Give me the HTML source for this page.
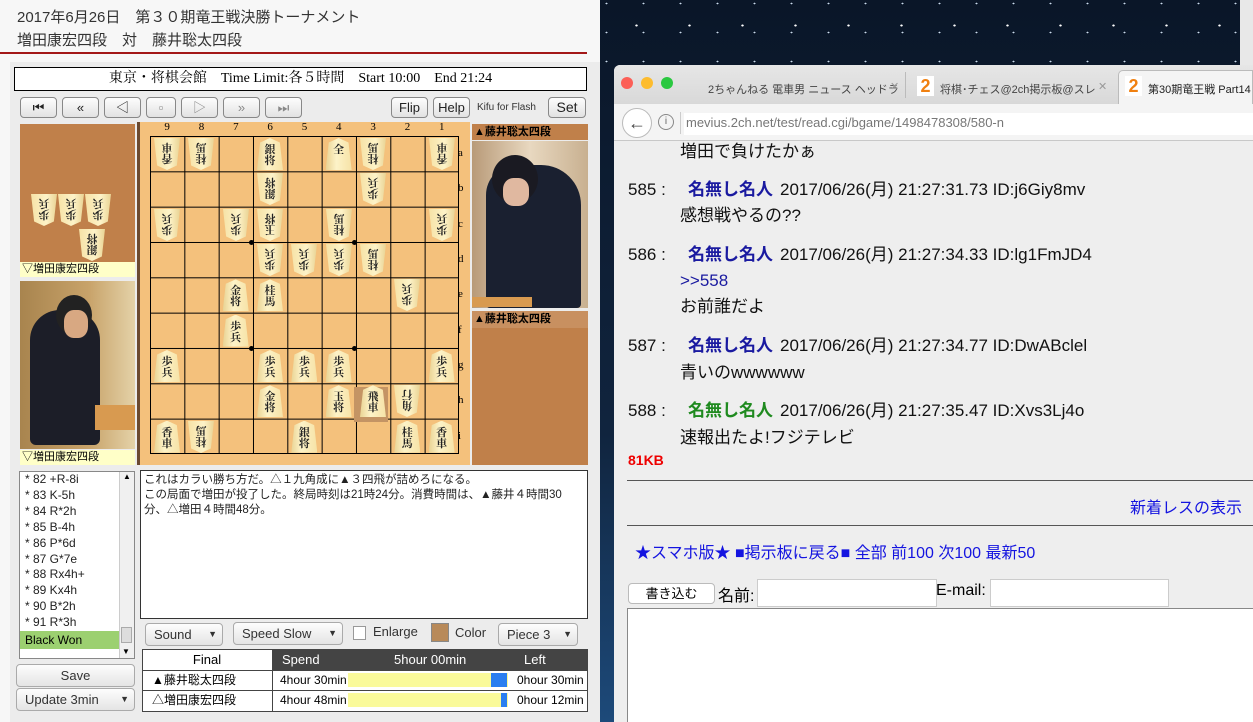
<!DOCTYPE html>
<html><head><meta charset="utf-8"><style>
*{margin:0;padding:0;box-sizing:border-box}
body{width:1253px;height:722px;overflow:hidden;position:relative;background:#f7f7f7;font-family:"Liberation Sans","Noto Sans CJK JP",sans-serif}
.a{position:absolute}
.btn{position:absolute;top:97px;height:21px;border:1px solid #888;border-radius:4px;background:linear-gradient(#fdfdfd,#e2e2e2);font-size:13px;text-align:center;line-height:19px;color:#222}
.pc{position:absolute;width:26px;height:32px;background:linear-gradient(90deg,#e9d394,#fdf3c8 40%,#f6e2a6);clip-path:polygon(50% 0,88% 14%,100% 100%,0 100%,12% 14%);font-family:"Noto Serif CJK SC","Noto Sans CJK JP",serif;font-size:11px;line-height:11px;text-align:center;padding-top:6px;color:#222;font-weight:bold}
.r{transform:rotate(180deg)}
.bt{position:absolute;height:23px;border:1px solid #aaa;border-radius:4px;background:linear-gradient(#fdfdfd,#e4e4e4);font-size:13px;line-height:21px;color:#333;padding-left:8px}
.post{position:absolute;left:628px;font-size:17px;line-height:22px;color:#111;white-space:nowrap}
.no{display:inline-block;width:60px}
.nm{display:inline-block;width:92px;color:#1a1aa0;font-weight:bold}
</style></head><body>
<div class="a" style="left:17px;top:6px;font-size:15px;color:#333">2017年6月26日　第３０期竜王戦決勝トーナメント</div>
<div class="a" style="left:17px;top:29px;font-size:15px;color:#333">増田康宏四段　対　藤井聡太四段</div>
<div class="a" style="left:0;top:52px;width:587px;height:2px;background:#a31818"></div>
<div class="a" style="left:10px;top:62px;width:590px;height:660px;background:#ececec"></div>
<div class="a" style="left:14px;top:67px;width:573px;height:24px;background:#fff;border:1px solid #000;font-family:'Liberation Serif','Noto Serif CJK SC',serif;font-size:14px;text-align:center;line-height:22px">東京・将棋会館　Time Limit:各５時間　Start 10:00　End 21:24</div>
<div class="btn" style="left:20px;width:37px">⏮</div>
<div class="btn" style="left:62px;width:37px">«</div>
<div class="btn" style="left:104px;width:37px">◁</div>
<div class="btn" style="left:146px;width:30px;color:#888">▫</div>
<div class="btn" style="left:181px;width:37px;color:#888">▷</div>
<div class="btn" style="left:223px;width:37px;color:#888">»</div>
<div class="btn" style="left:265px;width:37px;color:#888">⏭</div>
<div class="btn" style="left:391px;width:37px">Flip</div>
<div class="btn" style="left:433px;width:37px">Help</div>
<div class="a" style="left:477px;top:102px;font-size:10px;color:#333">Kifu for Flash</div>
<div class="btn" style="left:548px;width:38px;font-size:14px">Set</div>
<div class="a" style="left:20px;top:124px;width:115px;height:153px;background:#c0804a"></div>
<div class="a" style="left:20px;top:262px;width:115px;height:15px;background:#ffffc8;font-size:11px;line-height:15px;padding-left:2px">▽増田康宏四段</div>
<div class="a" style="left:20px;top:281px;width:115px;height:168px;background:linear-gradient(90deg,#a8844e,#c8a36a 60%,#e4d2a8)"></div>
<div class="a" style="left:30px;top:310px;width:70px;height:135px;background:#1c1e28;border-radius:30px 30px 6px 6px"></div>
<div class="a" style="left:56px;top:295px;width:36px;height:40px;background:#222;border-radius:50%"></div>
<div class="a" style="left:64px;top:310px;width:24px;height:28px;background:#d8a882;border-radius:40%"></div>
<div class="a" style="left:95px;top:405px;width:40px;height:25px;background:#d89a50"></div>
<div class="a" style="left:20px;top:450px;width:115px;height:15px;background:#ffffc8;font-size:11px;line-height:15px;padding-left:2px">▽増田康宏四段</div>
<div class="a" style="left:137px;top:122px;width:333px;height:343px;background:#f4c17c;border-left:3px solid #6b4a30"></div>
<div class="a" style="left:150px;top:136px;width:309px;height:318px;border:1px solid #000;background-image:linear-gradient(90deg,#000 1px,transparent 1px),linear-gradient(#000 1px,transparent 1px);background-size:34.33px 100%,100% 35.33px;background-position:-1px 0,0 -1px"></div>
<div class="a" style="left:354px;top:387px;width:34px;height:35px;background:#c49464"></div>
<div class="a" style="left:249px;top:240px;width:5px;height:5px;border-radius:50%;background:#000"></div>
<div class="a" style="left:352px;top:240px;width:5px;height:5px;border-radius:50%;background:#000"></div>
<div class="a" style="left:249px;top:346px;width:5px;height:5px;border-radius:50%;background:#000"></div>
<div class="a" style="left:352px;top:346px;width:5px;height:5px;border-radius:50%;background:#000"></div>
<div class="a" style="left:150px;top:121px;width:309px;font-family:'Liberation Serif',serif;font-size:11px;display:flex;justify-content:space-around">
<span>9</span><span>8</span><span>7</span><span>6</span><span>5</span><span>4</span><span>3</span><span>2</span><span>1</span></div>
<div class="a" style="left:458px;top:136px;width:8px;font-family:'Liberation Serif',serif;font-size:11px;line-height:35.33px">a<br>b<br>c<br>d<br>e<br>f<br>g<br>h<br>i</div>
<div id="pcs"></div>
<div class="a" style="left:472px;top:124px;width:116px;height:16px;background:#c0804a;font-size:11px;font-weight:bold;line-height:16px;padding-left:2px">▲藤井聡太四段</div>
<div class="a" style="left:472px;top:141px;width:116px;height:167px;background:linear-gradient(90deg,#b89a78,#e8d8c0 50%,#c8b090)"></div>
<div class="a" style="left:486px;top:165px;width:95px;height:143px;background:#1a2030;border-radius:30px 40px 4px 4px"></div>
<div class="a" style="left:492px;top:155px;width:46px;height:48px;background:#1a1a22;border-radius:50%"></div>
<div class="a" style="left:503px;top:178px;width:26px;height:28px;background:#e0b8a0;border-radius:40%"></div>
<div class="a" style="left:472px;top:297px;width:60px;height:10px;background:#d89a50"></div>
<div class="a" style="left:472px;top:311px;width:116px;height:154px;background:#c0804a"></div>
<div class="a" style="left:472px;top:311px;width:116px;height:17px;background:#c89060;font-size:11px;font-weight:bold;line-height:17px;padding-left:2px">▲藤井聡太四段</div>
<div class="a" style="left:19px;top:471px;width:116px;height:188px;background:#fff;border:1px solid #888"></div>
<div class="a" style="left:25px;top:472px;font-size:12px;line-height:15.9px;color:#222">* 82 +R-8i<br>* 83 K-5h<br>* 84 R*2h<br>* 85 B-4h<br>* 86 P*6d<br>* 87 G*7e<br>* 88 Rx4h+<br>* 89 Kx4h<br>* 90 B*2h<br>* 91 R*3h</div>
<div class="a" style="left:20px;top:631px;width:99px;height:18px;background:#9cd070;font-size:12px;line-height:18px;padding-left:5px">Black Won</div>
<div class="a" style="left:119px;top:472px;width:15px;height:186px;background:#f0f0f0;border-left:1px solid #ccc;font-size:8px;text-align:center">▲</div>
<div class="a" style="left:121px;top:627px;width:11px;height:16px;background:#ddd;border:1px solid #aaa"></div>
<div class="a" style="left:122px;top:647px;font-size:8px">▼</div>
<div class="bt" style="left:16px;top:664px;width:119px;text-align:center;padding:0">Save</div>
<div class="bt" style="left:16px;top:688px;width:119px">Update  3min <span style="position:absolute;right:5px;font-size:9px">▼</span></div>
<div class="a" style="left:140px;top:470px;width:448px;height:149px;background:#fff;border:1px solid #333;font-size:11.5px;line-height:15px;padding:2px 3px;color:#222">これはカラい勝ち方だ。△１九角成に▲３四飛が詰めろになる。<br>この局面で増田が投了した。終局時刻は21時24分。消費時間は、▲藤井４時間30分、△増田４時間48分。</div>
<div class="bt" style="left:145px;top:623px;width:78px">Sound <span style="position:absolute;right:5px;font-size:9px">▼</span></div>
<div class="bt" style="left:233px;top:622px;width:110px">Speed Slow <span style="position:absolute;right:5px;font-size:9px">▼</span></div>
<div class="a" style="left:353px;top:626px;width:13px;height:14px;background:#fff;border:1px solid #999"></div>
<div class="a" style="left:373px;top:624px;font-size:13px;color:#333">Enlarge</div>
<div class="a" style="left:431px;top:623px;width:18px;height:19px;background:#b88a5a;border:1px solid #888"></div>
<div class="a" style="left:455px;top:625px;font-size:13px;color:#333">Color</div>
<div class="bt" style="left:498px;top:623px;width:80px">Piece 3 <span style="position:absolute;right:5px;font-size:9px">▼</span></div>
<div class="a" style="left:142px;top:649px;width:446px;height:63px;border:1px solid #444;background:#fff"></div>
<div class="a" style="left:272px;top:649px;width:316px;height:21px;background:#444;color:#fff;font-size:13px;line-height:21px"><span class="a" style="left:10px">Spend</span><span class="a" style="left:122px">5hour 00min</span><span class="a" style="left:252px">Left</span></div>
<div class="a" style="left:142px;top:649px;width:130px;height:21px;text-align:center;font-size:13px;line-height:21px">Final</div>
<div class="a" style="left:142px;top:670px;width:446px;height:1px;background:#444"></div>
<div class="a" style="left:142px;top:690px;width:446px;height:1px;background:#444"></div>
<div class="a" style="left:272px;top:670px;width:1px;height:42px;background:#444"></div>
<div class="a" style="left:152px;top:671px;font-size:12px;line-height:19px">▲藤井聡太四段</div>
<div class="a" style="left:152px;top:691px;font-size:12px;line-height:19px">△増田康宏四段</div>
<div class="a" style="left:348px;top:673px;width:160px;height:14px;background:#fafa9a"></div>
<div class="a" style="left:491px;top:673px;width:16px;height:14px;background:#2a7ef0"></div>
<div class="a" style="left:348px;top:693px;width:160px;height:14px;background:#fafa9a"></div>
<div class="a" style="left:501px;top:693px;width:6px;height:14px;background:#2a7ef0"></div>
<div class="a" style="left:280px;top:672px;font-size:12px;line-height:17px">4hour 30min</div>
<div class="a" style="left:280px;top:692px;font-size:12px;line-height:17px">4hour 48min</div>
<div class="a" style="left:517px;top:672px;font-size:12px;line-height:17px;width:70px;overflow:hidden;white-space:nowrap">0hour 30min</div>
<div class="a" style="left:517px;top:692px;font-size:12px;line-height:17px;width:70px;overflow:hidden;white-space:nowrap">0hour 12min</div>

<div class="a" style="left:600px;top:0;width:653px;height:722px;background:linear-gradient(#0a1628,#10243e 60%,#1d4a7a)"></div>
<div class="a" style="left:600px;top:0;width:653px;height:65px;background-image:radial-gradient(#fff 1px,transparent 1.5px),radial-gradient(#cde 0.8px,transparent 1.2px);background-size:53px 41px,37px 29px;background-position:10px 5px,25px 18px"></div>
<div class="a" style="left:1240px;top:0;width:13px;height:65px;background:#e8e8e8"></div>
<div class="a" style="left:614px;top:65px;width:639px;height:657px;background:#eeeeee;border-radius:6px 0 0 0"></div>
<div class="a" style="left:614px;top:65px;width:639px;height:40px;background:linear-gradient(#e6e6e6,#d8d8d8);border-radius:6px 0 0 0"></div>
<div class="a" style="left:621px;top:77px;width:12px;height:12px;border-radius:50%;background:#fc5f57"></div>
<div class="a" style="left:641px;top:77px;width:12px;height:12px;border-radius:50%;background:#fdbc2e"></div>
<div class="a" style="left:661px;top:77px;width:12px;height:12px;border-radius:50%;background:#2ac840"></div>
<div class="a" style="left:708px;top:81px;font-size:11px;color:#444">2ちゃんねる 電車男 ニュース ヘッドラ</div>
<div class="a" style="left:890px;top:80px;font-size:11px;color:#999">✕</div>
<div class="a" style="left:905px;top:72px;width:1px;height:26px;background:#bbb"></div>
<div class="a" style="left:917px;top:76px;width:17px;height:20px;background:#fff;color:#f08010;font-size:18px;font-weight:bold;line-height:20px;text-align:center">2</div>
<div class="a" style="left:940px;top:81px;font-size:11px;color:#444">将棋･チェス@2ch掲示板@スレ</div>
<div class="a" style="left:1098px;top:80px;font-size:11px;color:#999">✕</div>
<div class="a" style="left:1118px;top:70px;width:135px;height:35px;background:#f4f4f4;border:1px solid #bbb;border-bottom:none;border-radius:5px 0 0 0"></div>
<div class="a" style="left:1125px;top:76px;width:17px;height:20px;background:#fff;color:#f08010;font-size:18px;font-weight:bold;line-height:20px;text-align:center">2</div>
<div class="a" style="left:1148px;top:81px;font-size:11px;color:#222;white-space:nowrap">第30期竜王戦 Part14</div>
<div class="a" style="left:614px;top:104px;width:639px;height:37px;background:#f4f4f4;border-bottom:1px solid #c8c8c8"></div>
<div class="a" style="left:622px;top:108px;width:30px;height:30px;border-radius:50%;background:#fff;border:1px solid #bbb;text-align:center;line-height:28px;font-size:18px;font-weight:bold;color:#444">←</div>
<div class="a" style="left:658px;top:114px;width:16px;height:16px;border-radius:50%;border:1px solid #888;font-size:10px;text-align:center;line-height:14px;color:#666">i</div>
<div class="a" style="left:680px;top:112px;width:1px;height:22px;background:#ccc"></div>
<div class="a" style="left:684px;top:113px;width:569px;height:22px;background:#fff"></div>
<div class="a" style="left:686px;top:115px;font-size:13px;color:#777">mevius.2ch.net/test/read.cgi/bgame/1498478308/580-n</div>
<div class="post" style="left:680px;top:141px">増田で負けたかぁ</div>
<div class="post" style="top:179px"><span class="no">585 :</span><span class="nm">名無し名人</span>2017/06/26(月) 21:27:31.73 ID:j6Giy8mv</div>
<div class="post" style="left:680px;top:205px">感想戦やるの??</div>
<div class="post" style="top:244px"><span class="no">586 :</span><span class="nm">名無し名人</span>2017/06/26(月) 21:27:34.33 ID:lg1FmJD4</div>
<div class="post" style="left:680px;top:270px;color:#1a1aa0">&gt;&gt;558</div>
<div class="post" style="left:680px;top:296px">お前誰だよ</div>
<div class="post" style="top:335px"><span class="no">587 :</span><span class="nm">名無し名人</span>2017/06/26(月) 21:27:34.77 ID:DwABclel</div>
<div class="post" style="left:680px;top:362px">青いのwwwwww</div>
<div class="post" style="top:400px"><span class="no">588 :</span><span class="nm" style="color:#1f8a1f">名無し名人</span>2017/06/26(月) 21:27:35.47 ID:Xvs3Lj4o</div>
<div class="post" style="left:680px;top:427px">速報出たよ!フジテレビ</div>
<div class="post" style="top:449px;font-size:14px;color:#e00;font-weight:bold">81KB</div>
<div class="a" style="left:627px;top:480px;width:626px;height:1px;background:#555"></div>
<div class="a" style="left:1130px;top:494px;font-size:16px;color:#1414e0">新着レスの表示</div>
<div class="a" style="left:627px;top:525px;width:626px;height:1px;background:#555"></div>
<div class="a" style="left:635px;top:539px;font-size:16px;color:#1414e0;white-space:nowrap">★スマホ版★ ■掲示板に戻る■ 全部 前100 次100 最新50</div>
<div class="a" style="left:628px;top:583px;width:87px;height:21px;background:#fff;border:1px solid #bbb;border-radius:4px;font-size:13px;text-align:center;line-height:19px">書き込む</div>
<div class="a" style="left:718px;top:582px;font-size:16px">名前:</div>
<div class="a" style="left:757px;top:579px;width:180px;height:28px;background:#fff;border:1px solid #ccc"></div>
<div class="a" style="left:936px;top:582px;font-size:16px">E-mail:</div>
<div class="a" style="left:990px;top:579px;width:179px;height:28px;background:#fff;border:1px solid #ccc"></div>
<div class="a" style="left:627px;top:608px;width:626px;height:114px;background:#fff;border-top:1px solid #888;border-left:1px solid #888"></div>

<script>
var P=[
[9,0,'香車',1],[8,0,'桂馬',1],[6,0,'銀将',0],[4,0,'全',0],[3,0,'桂馬',1],[1,0,'香車',1],
[6,1,'銀将',1],[3,1,'歩兵',1],
[9,2,'歩兵',1],[7,2,'歩兵',1],[6,2,'玉将',1],[4,2,'桂馬',1],[1,2,'歩兵',1],
[6,3,'歩兵',1],[5,3,'歩兵',1],[4,3,'歩兵',1],[3,3,'桂馬',1],
[7,4,'金将',0],[6,4,'桂馬',0],[2,4,'歩兵',1],
[7,5,'歩兵',0],
[9,6,'歩兵',0],[6,6,'歩兵',0],[5,6,'歩兵',0],[4,6,'歩兵',0],[1,6,'歩兵',0],
[6,7,'金将',0],[4,7,'玉将',0],[3,7,'飛車',0],[2,7,'角行',1],
[9,8,'香車',0],[8,8,'桂馬',1],[5,8,'銀将',0],[2,8,'桂馬',0],[1,8,'香車',0]];
var h='';
function pc(x,y,t,r){return '<div class="pc'+(r?' r':'')+'" style="left:'+x+'px;top:'+y+'px">'+t.split('').join('<br>')+'</div>';}
P.forEach(function(p){var x=150+(9-p[0])*34.33+4,y=136+p[1]*35.33+2;h+=pc(x,y,p[2],p[3]);});
h+=pc(31,194,'歩兵',1)+pc(58,194,'歩兵',1)+pc(85,194,'歩兵',1)+pc(79,229,'銀将',1)+pc(482,331,'歩兵',0);
document.getElementById('pcs').innerHTML=h;
</script>
</body></html>
